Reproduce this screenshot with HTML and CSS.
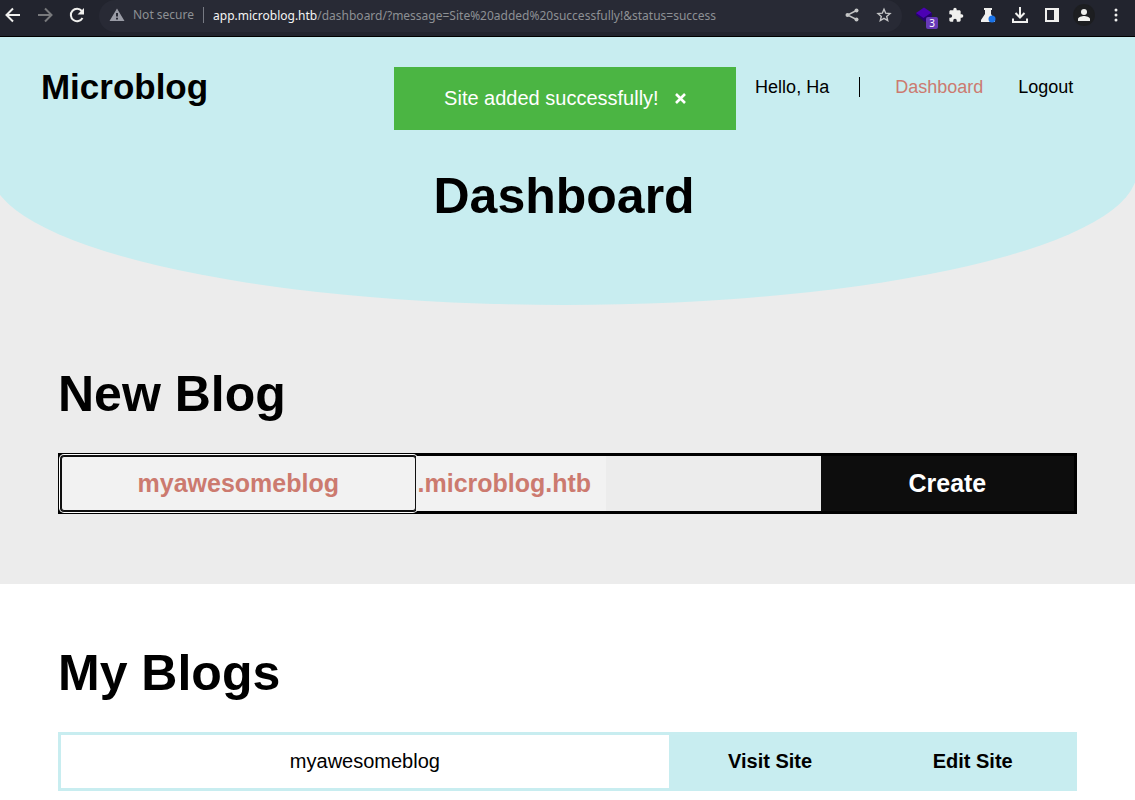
FILE: index.html
```html
<!DOCTYPE html>
<html lang="en">
<head>
<meta charset="utf-8">
<meta name="viewport" content="width=device-width, initial-scale=1">
<title>Microblog - Dashboard</title>
<link rel="stylesheet" href="styles.css">
</head>
<body>
<div class="browser-bar">
  <button class="tool" type="button" aria-label="Back"><svg viewBox="0 0 20 20"><path class="line" d="M17 10H4M10 3.5L3.5 10l6.5 6.5"/></svg></button>
  <button class="tool tool-dim" type="button" aria-label="Forward"><svg viewBox="0 0 20 20"><path class="line" d="M3 10h13M10 3.5l6.5 6.5-6.5 6.5"/></svg></button>
  <button class="tool" type="button" aria-label="Reload"><svg viewBox="0 0 20 20"><path class="line" d="M15.5 13A6.200 6.200 0 1 1 14.800 6"/><path d="M17 3v6.500h-6.500z"/></svg></button>
  <div class="address">
    <span class="tool tool-soft"><svg viewBox="0 0 20 20"><path fill-rule="evenodd" d="M10 3.500L17.500 16h-15zM9 8v3.500h2V8zM9 12.700v1.800h2v-1.800z"/></svg></span>
    <span class="security">Not secure</span>
    <span class="url"><span class="host">app.microblog.htb</span>/dashboard/?message=Site%20added%20successfully!&amp;status=success</span>
    <button class="tool tool-mid" type="button" aria-label="Share"><svg viewBox="0 0 20 20"><path class="thin" d="M14.500 5.500L5.500 10l9 4.500"/><circle cx="14.500" cy="5.500" r="2"/><circle cx="5.500" cy="10" r="2"/><circle cx="14.500" cy="14.500" r="2"/></svg></button>
    <button class="tool tool-mid" type="button" aria-label="Bookmark"><svg viewBox="0 0 20 20"><path class="thin" d="M10 4.200l1.700 4 4.300.400-3.300 2.800 1 4.200-3.700-2.200-3.700 2.200 1-4.200L4 8.600l4.300-.400z"/></svg></button>
  </div>
  <div class="tools">
    <button class="tool extension" type="button" aria-label="Extension"><svg viewBox="0 0 20 20"><path fill="#26006f" d="M2 10l9 7 7-6V8H2z"/><path fill="#4b00b4" d="M10 2.500l7.500 5L9.500 13 2 8z"/></svg><span class="count">3</span></button>
    <button class="tool" type="button" aria-label="Extensions"><svg viewBox="0 0 24 24"><path d="M20.500 11H19V7c0-1.100-.9-2-2-2h-4V3.500a2.500 2.500 0 0 0-5 0V5H4c-1.100 0-2 .9-2 2v3.800h1.500a2.700 2.700 0 0 1 0 5.400H2V20c0 1.100.9 2 2 2h3.800v-1.500a2.700 2.700 0 0 1 5.400 0V22H17c1.100 0 2-.9 2-2v-4h1.500a2.500 2.500 0 0 0 0-5z"/></svg></button>
    <button class="tool" type="button" aria-label="Experiments"><svg viewBox="0 0 20 20"><path d="M6 3h8v2h-1v4l4 6v2H3v-2l4-6V5H6z"/><circle cx="14" cy="14" r="3.500" fill="#1a73e8"/></svg></button>
    <button class="tool" type="button" aria-label="Downloads"><svg viewBox="0 0 20 20"><path class="line" d="M10 2v10M5.500 8l4.500 4.500L14.500 8M3 13.500V17h14v-3.500"/></svg></button>
    <button class="tool" type="button" aria-label="Side panel"><svg viewBox="0 0 20 20"><path fill-rule="evenodd" d="M3 3h14v14H3zM5 5v10h7V5z"/></svg></button>
    <button class="tool avatar" type="button" aria-label="Profile"><svg viewBox="0 0 20 20"><circle cx="10" cy="7" r="3"/><path d="M4 16v-2c0-2 4-3 6-3s6 1 6 3v2z"/></svg></button>
    <button class="tool" type="button" aria-label="Menu"><svg viewBox="0 0 20 20"><circle cx="10" cy="5" r="1.500"/><circle cx="10" cy="10" r="1.500"/><circle cx="10" cy="15" r="1.500"/></svg></button>
  </div>
</div>

<div class="top">
  <header class="hero">
    <div class="bar">
      <div class="logo">Microblog</div>
      <nav class="nav">
        <span class="greeting">Hello, Ha</span>
        <a class="current" href="#dashboard">Dashboard</a>
        <a href="#logout">Logout</a>
      </nav>
    </div>
    <h1 class="title page-title">Dashboard</h1>
    <div class="toast" role="status">
      <span>Site added successfully!</span>
      <button class="close" type="button" aria-label="Close"><svg viewBox="0 0 11 11"><path d="M1 1l9 9M10 1L1 10"/></svg></button>
    </div>
  </header>

  <section class="section">
    <h2 class="title">New Blog</h2>
    <form class="new-blog">
      <input class="name" type="text" value="myawesomeblog" aria-label="Blog name">
      <span class="suffix">.microblog.htb</span>
      <button class="create" type="button">Create</button>
    </form>
  </section>
</div>

<section class="section blogs">
  <h2 class="title">My Blogs</h2>
  <div class="blog">
    <span class="blog-name">myawesomeblog</span>
    <a class="blog-link" href="#visit">Visit Site</a>
    <a class="blog-link" href="#edit">Edit Site</a>
  </div>
</section>
</body>
</html>
```
FILE: styles.css
```css
* {
  box-sizing: border-box;
}

body {
  margin: 0;
  background: #fff;
  color: #000;
  font-family: "Liberation Sans", Arial, sans-serif;
  overflow-x: hidden;
}

button,
input {
  margin: 0;
  padding: 0;
  border: 0;
  font: inherit;
}

a {
  color: inherit;
  text-decoration: none;
}

/* Browser toolbar */
.browser-bar {
  display: flex;
  align-items: flex-start;
  gap: 12px;
  padding: 0 9px 4px 3px;
  background: #22242e;
  border-bottom: 1px solid #000;
  font-family: "Noto Sans", sans-serif;
  font-size: 12px;
}

.tool {
  flex: none;
  display: flex;
  align-items: center;
  width: 20px;
  height: 30px;
  background: none;
  color: #f0f0ee;
}

.tool svg {
  width: 20px;
  height: 20px;
  fill: currentColor;
}

.tool .line,
.tool .thin {
  fill: none;
  stroke: currentColor;
  stroke-width: 2;
}

.tool .thin {
  stroke-width: 1.4;
}

.tool-dim {
  color: #78797c;
}

.tool-soft {
  color: #9a9ca6;
}

.tool-mid {
  color: #c4c5c6;
}

.address {
  flex: 1;
  display: flex;
  align-items: center;
  min-width: 0;
  height: 32px;
  padding: 0 8px 2px;
  border-radius: 16px;
  background: #282a35;
  color: #8d9094;
}

.security {
  margin: 0 9px 0 6px;
  padding-right: 9px;
  border-right: 1px solid #777a83;
  line-height: 16px;
  white-space: nowrap;
}

.url {
  flex: 1;
  min-width: 0;
  overflow: hidden;
  white-space: nowrap;
}

.host {
  color: #f4f4f4;
}

.address button + button {
  margin-left: 12px;
}

.tools {
  display: flex;
  gap: 12px;
}

.extension {
  position: relative;
}

.count {
  position: absolute;
  top: 17px;
  left: 12px;
  width: 12px;
  border-radius: 2px;
  background: #673ab7;
  color: #fff;
  font-size: 10px;
  line-height: 12px;
  text-align: center;
}

.tools svg[viewBox="0 0 24 24"] {
  padding: 2px;
}

.avatar svg {
  border-radius: 50%;
  background: #1d1e21;
  box-shadow: 0 0 0 1px #1d1e21;
}

/* Page header */
.top {
  overflow: hidden;
  background: #ececec;
}

.hero {
  position: relative;
  width: 101%;
  margin-left: -0.8%;
  padding: 30px 0 80px;
  border-radius: 0 0 50% 50%;
  background: #c8edf0;
}

.bar {
  display: flex;
  align-items: center;
  justify-content: space-between;
  padding: 0 64px 0 50px;
}

.logo {
  font-size: 35px;
  font-weight: bold;
  line-height: 40px;
}

.nav {
  display: flex;
  align-items: center;
  gap: 35px;
  font-size: 18px;
  line-height: 20px;
}

.greeting {
  padding-right: 30px;
  border-right: 1px solid #000;
}

.current {
  color: #cc7a6f;
}

.title {
  margin: 0 0 32px;
  font-size: 50px;
  line-height: 54px;
}

.page-title {
  margin: 62px 0 2px;
  text-align: center;
}

.toast {
  position: absolute;
  top: 30px;
  left: 50%;
  display: flex;
  align-items: center;
  gap: 16px;
  margin-left: -170px;
  padding: 20px 50px;
  background: #4bb543;
  color: #fff;
  font-size: 20px;
  line-height: 23px;
  white-space: nowrap;
}

.close {
  display: flex;
  background: none;
}

.close svg {
  width: 11px;
  height: 11px;
  fill: none;
  stroke: #fff;
  stroke-width: 2.6;
}

/* Sections */
.section {
  padding: 62px 58px 70px;
}

.blogs {
  padding-bottom: 8px;
}

.new-blog {
  display: flex;
  border: 3px solid #000;
  color: #cc7a6f;
  font-size: 25px;
  font-weight: bold;
  line-height: 55px;
}

.name {
  width: 35%;
  min-width: 0;
  height: 55px;
  border: 1px solid #101010;
  border-radius: 3px;
  outline: 0;
  background: #f2f2f2;
  box-shadow: 0 0 0 1px #101010, 0 0 0 2px #fff;
  color: inherit;
  text-align: center;
}

.suffix {
  padding: 0 15px 0 2px;
  background: #f2f2f2;
}

.create {
  width: 25%;
  margin-left: auto;
  background: #0d0d0d;
  color: #fff;
}

.blog {
  display: flex;
  border: 3px solid #c8edf0;
  font-size: 20px;
  line-height: 53px;
  text-align: center;
}

.blog-name {
  width: 60%;
}

.blog-link {
  width: 20%;
  background: #c8edf0;
  font-weight: bold;
}
```
